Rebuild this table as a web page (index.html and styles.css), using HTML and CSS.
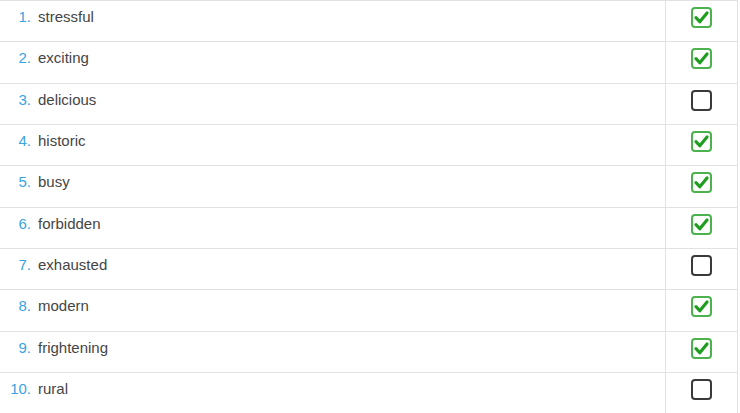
FILE: index.html
```html
<!DOCTYPE html>
<html>
<head>
<meta charset="utf-8">
<link rel="stylesheet" href="styles.css">
</head>
<body>
<div class="list">
  <div class="row"><div class="word"><span class="num">1.</span><span class="txt">stressful</span></div><div class="check"><span class="box on"><svg viewBox="0 0 16 16"><path d="M2.8 8.2 L6.4 12 L13.2 3.8"/></svg></span></div></div>
  <div class="row"><div class="word"><span class="num">2.</span><span class="txt">exciting</span></div><div class="check"><span class="box on"><svg viewBox="0 0 16 16"><path d="M2.8 8.2 L6.4 12 L13.2 3.8"/></svg></span></div></div>
  <div class="row"><div class="word"><span class="num">3.</span><span class="txt">delicious</span></div><div class="check"><span class="box"></span></div></div>
  <div class="row"><div class="word"><span class="num">4.</span><span class="txt">historic</span></div><div class="check"><span class="box on"><svg viewBox="0 0 16 16"><path d="M2.8 8.2 L6.4 12 L13.2 3.8"/></svg></span></div></div>
  <div class="row"><div class="word"><span class="num">5.</span><span class="txt">busy</span></div><div class="check"><span class="box on"><svg viewBox="0 0 16 16"><path d="M2.8 8.2 L6.4 12 L13.2 3.8"/></svg></span></div></div>
  <div class="row"><div class="word"><span class="num">6.</span><span class="txt">forbidden</span></div><div class="check"><span class="box on"><svg viewBox="0 0 16 16"><path d="M2.8 8.2 L6.4 12 L13.2 3.8"/></svg></span></div></div>
  <div class="row"><div class="word"><span class="num">7.</span><span class="txt">exhausted</span></div><div class="check"><span class="box"></span></div></div>
  <div class="row"><div class="word"><span class="num">8.</span><span class="txt">modern</span></div><div class="check"><span class="box on"><svg viewBox="0 0 16 16"><path d="M2.8 8.2 L6.4 12 L13.2 3.8"/></svg></span></div></div>
  <div class="row"><div class="word"><span class="num">9.</span><span class="txt">frightening</span></div><div class="check"><span class="box on"><svg viewBox="0 0 16 16"><path d="M2.8 8.2 L6.4 12 L13.2 3.8"/></svg></span></div></div>
  <div class="row"><div class="word"><span class="num">10.</span><span class="txt">rural</span></div><div class="check"><span class="box"></span></div></div>
</div>
</body>
</html>
```
FILE: styles.css
```css
html, body {
  margin: 0;
  padding: 0;
  background: #fff;
}
body {
  font-family: "Liberation Sans", Arial, sans-serif;
  font-size: 15px;
  color: #444;
  overflow: hidden;
}
.list {
  width: 738px;
  border-top: 1px solid #e2e2e2;
  border-right: 1px solid #e2e2e2;
  box-sizing: border-box;
}
.row {
  display: flex;
  height: 41.33px;
  box-sizing: border-box;
  border-bottom: 1px solid #e2e2e2;
}
.word {
  width: 665px;
  border-right: 1px solid #e2e2e2;
  display: flex;
  padding-top: 6px;
  line-height: 20px;
}
.num {
  width: 31px;
  text-align: right;
  color: #3aa3e0;
  margin-right: 7px;
  flex: none;
}
.txt {
  color: #454545;
}
.check {
  flex: 1;
  display: flex;
  justify-content: center;
  padding-top: 6px;
}
.box {
  width: 21px;
  height: 21px;
  box-sizing: border-box;
  border: 2px solid #3a3a3a;
  border-radius: 4px;
  display: flex;
  align-items: center;
  justify-content: center;
}
.box.on {
  border-color: #4cb24e;
}
.box svg {
  width: 17px;
  height: 17px;
}
.box svg path {
  fill: none;
  stroke: #1e9e1e;
  stroke-width: 3;
  stroke-linecap: round;
  stroke-linejoin: round;
}
```
